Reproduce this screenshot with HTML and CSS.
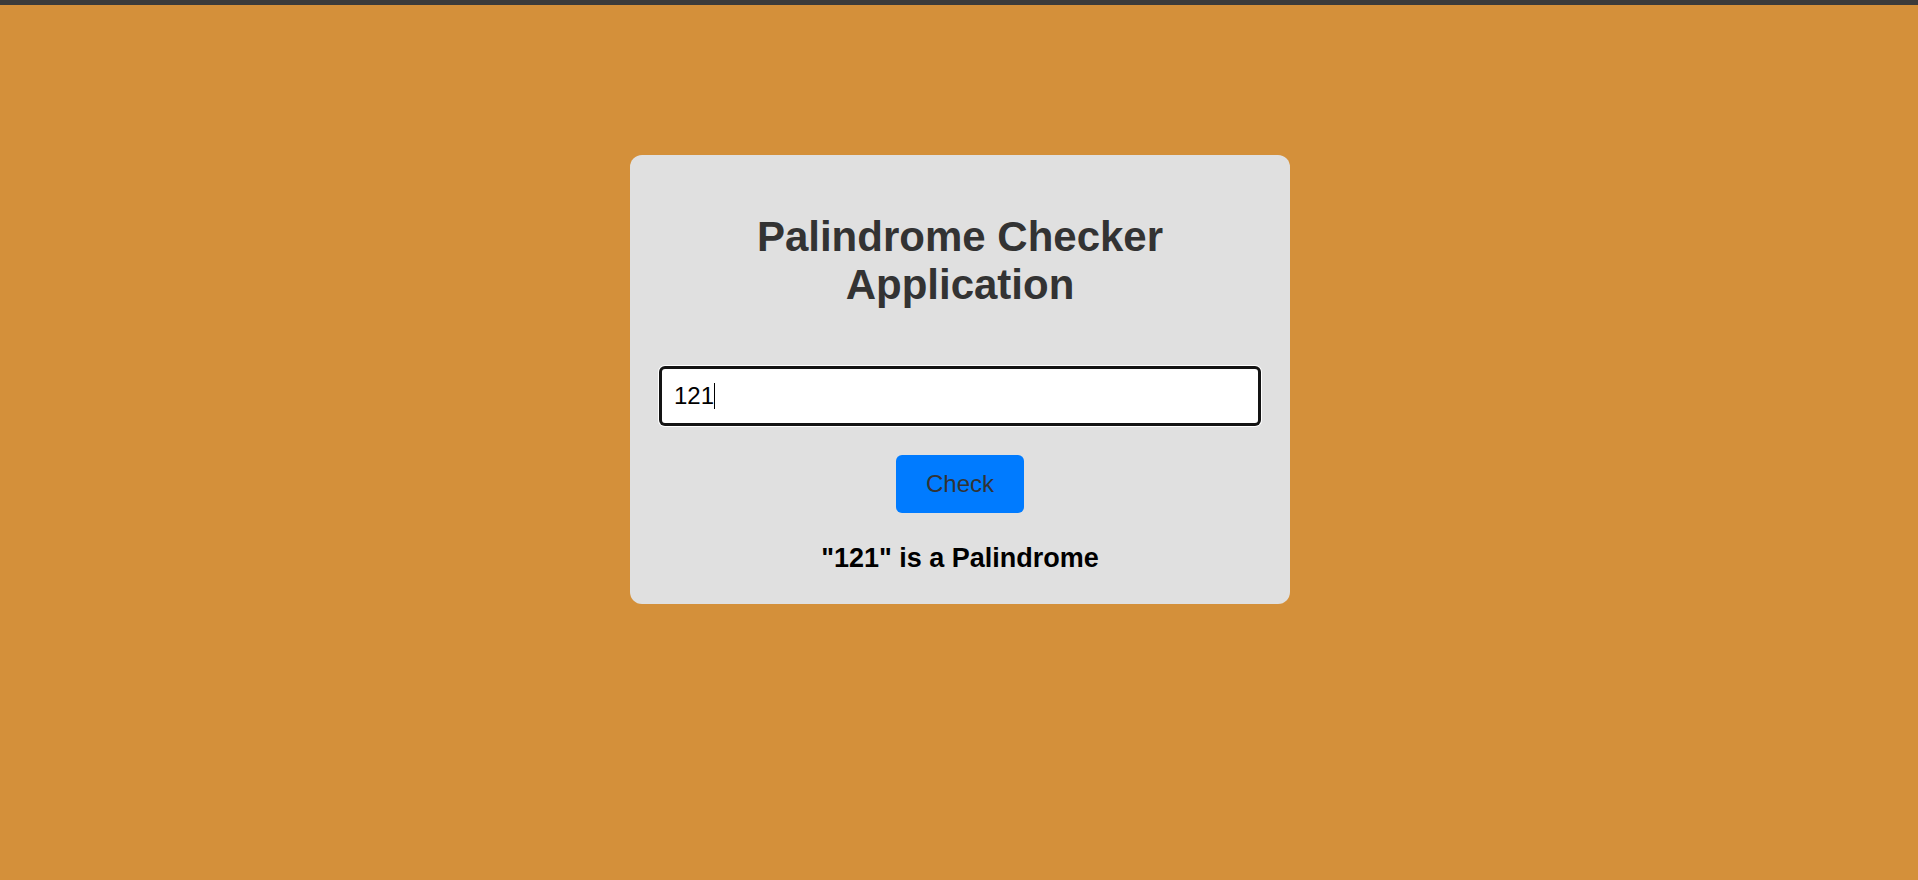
FILE: index.html
```html
<!DOCTYPE html>
<html lang="en">
<head>
<meta charset="utf-8">
<title>Palindrome Checker</title>
<link rel="stylesheet" href="styles.css">
</head>
<body>
<div class="topbar"></div>
<main class="page">
  <section class="card">
    <h1 class="title">Palindrome Checker Application</h1>
    <div class="field-wrap">
      <input class="field" type="text" value="121" aria-label="Text to check">
      <span class="caret"></span>
    </div>
    <button class="check-btn" type="button">Check</button>
    <p class="result">"121" is a Palindrome</p>
  </section>
</main>
</body>
</html>
```

FILE: styles.css
```css
* {
  box-sizing: border-box;
}

html, body {
  margin: 0;
  padding: 0;
}

body {
  min-height: 880px;
  background: #d4903a;
  font-family: "Liberation Sans", Arial, sans-serif;
}

.topbar {
  height: 5px;
  background: #3b3b3b;
}

.page {
  display: flex;
  justify-content: center;
  padding-top: 150px;
  padding-left: 2px;
}

.card {
  width: 660px;
  padding: 30px 30px 30px;
  background: #e0e0e0;
  border-radius: 12px;
  display: flex;
  flex-direction: column;
  align-items: center;
}

.title {
  margin: 28px 0 58px;
  font-size: 42px;
  line-height: 48px;
  font-weight: bold;
  color: #333333;
  text-align: center;
}

.field-wrap {
  position: relative;
  width: 100%;
}

.field {
  display: block;
  width: 100%;
  height: 58px;
  padding: 14px 12px;
  border: 2px solid #141414;
  border-radius: 5px;
  background: #ffffff;
  font-family: "Liberation Sans", Arial, sans-serif;
  font-size: 24px;
  line-height: 26px;
  color: #000000;
  outline: none;
  box-shadow: 0 0 0 1px #141414, 0 0 0 2px #ffffff;
}

.caret {
  position: absolute;
  left: 54px;
  top: 16px;
  width: 1px;
  height: 26px;
  background: #000000;
}

.check-btn {
  margin-top: 30px;
  padding: 15px 30px;
  border: none;
  border-radius: 6px;
  background: #007bff;
  color: #333333;
  font-family: "Liberation Sans", Arial, sans-serif;
  font-size: 24px;
  line-height: 28px;
  cursor: pointer;
}

.result {
  margin: 30px 0 0;
  font-size: 27px;
  line-height: 31px;
  font-weight: bold;
  color: #000000;
  text-align: center;
}
```
